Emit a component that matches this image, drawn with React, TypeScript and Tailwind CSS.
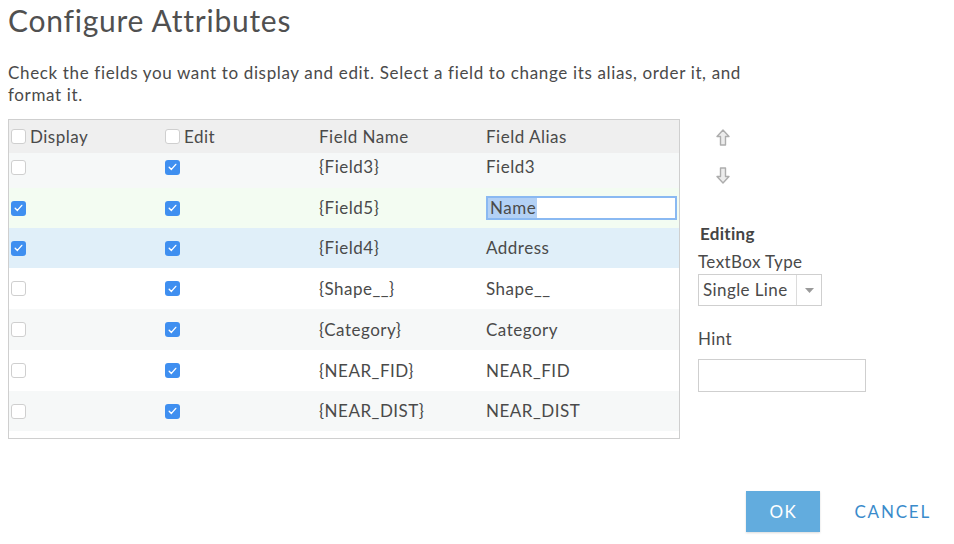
import React from "react";

const Check = ({ checked }: { checked: boolean }) =>
  checked ? (
    <div className="w-[15px] h-[15px] rounded-[3px] bg-[#3f8ff0] flex items-center justify-center">
      <svg width="9" height="8" viewBox="0 0 9 8">
        <path d="M1.2 4.3 L3.4 6.4 L7.8 1.4" fill="none" stroke="white" strokeWidth="1.4" strokeLinecap="round" strokeLinejoin="round" />
      </svg>
    </div>
  ) : (
    <div className="w-[15px] h-[15px] rounded-[3px] border border-[#cfcfcf] bg-white" />
  );

const rows = [
  { d: false, e: true, name: "{Field3}", alias: "Field3", bg: "bg-[#f6f8f8]", h: "h-[35px] pb-[7px]" },
  { d: true, e: true, name: "{Field5}", alias: "Name", bg: "bg-[#f3fcf2]", h: "h-[40px]", edit: true },
  { d: true, e: true, name: "{Field4}", alias: "Address", bg: "bg-[#e0eff9]", h: "h-[40px]" },
  { d: false, e: true, name: "{Shape__}", alias: "Shape__", bg: "bg-white", h: "h-[41px]" },
  { d: false, e: true, name: "{Category}", alias: "Category", bg: "bg-[#f6f8f8]", h: "h-[41px]" },
  { d: false, e: true, name: "{NEAR_FID}", alias: "NEAR_FID", bg: "bg-white", h: "h-[41px]" },
  { d: false, e: true, name: "{NEAR_DIST}", alias: "NEAR_DIST", bg: "bg-[#f6f8f8]", h: "h-[40px]" },
];

export default function App() {
  return (
    <div className="w-[954px] h-[544px] bg-white text-[#4a4a4a] overflow-hidden" style={{ fontFamily: "Lato, 'Noto Sans', sans-serif" }}>
      <div className="pl-[8px] pt-[2px]">
        <h1 className="text-[30px] leading-[36px] font-normal tracking-[0.75px] text-[#505050]">Configure Attributes</h1>
        <p className="mt-[24px] text-[17px] leading-[22px] w-[760px] tracking-[0.65px]">
          Check the fields you want to display and edit. Select a field to change its alias, order it, and format it.
        </p>
        <div className="mt-[13px] flex">
          <div className="w-[672px] h-[320px] border border-[#cfcfcf] bg-white flex flex-col text-[17px] tracking-[0.5px]">
            <div className="h-[33px] bg-[#efefef] grid grid-cols-[156px_154px_167px_1fr] items-center">
              <div className="flex items-center gap-[4px] pl-[2px]"><Check checked={false} /><span>Display</span></div>
              <div className="flex items-center gap-[4px]"><Check checked={false} /><span>Edit</span></div>
              <div>Field Name</div>
              <div>Field Alias</div>
            </div>
            {rows.map((r, i) => (
              <div key={i} className={`${r.h} ${r.bg} grid grid-cols-[156px_154px_167px_1fr] items-center`}>
                <div className="pl-[2px]"><Check checked={r.d} /></div>
                <div><Check checked={r.e} /></div>
                <div>{r.name}</div>
                {r.edit ? (
                  <div className="h-[24px] w-[191px] border-2 border-[#8ab9f2] bg-white flex items-center">
                    <span className="bg-[#b3d1f5] h-[20px] leading-[20px] pl-[2px] pr-[1px]">{r.alias}</span>
                  </div>
                ) : (
                  <div>{r.alias}</div>
                )}
              </div>
            ))}
          </div>
          <div className="ml-[18px] flex flex-col">
            <div className="pl-[18px] pt-[10px] flex flex-col gap-[21px]">
              <svg width="14" height="17" viewBox="0 0 14 17">
                <path d="M7 1 L13 7.5 L9.5 7.5 L9.5 16 L4.5 16 L4.5 7.5 L1 7.5 Z" fill="#ececec" stroke="#adadad" strokeWidth="1.4" strokeLinejoin="round" />
              </svg>
              <svg width="14" height="17" viewBox="0 0 14 17">
                <path d="M7 16 L13 9.5 L9.5 9.5 L9.5 1 L4.5 1 L4.5 9.5 L1 9.5 Z" fill="#ececec" stroke="#adadad" strokeWidth="1.4" strokeLinejoin="round" />
              </svg>
            </div>
            <div className="mt-[39px] pl-[2px] text-[17px] font-bold leading-[22px] text-[#444] tracking-[0.3px]">Editing</div>
            <div className="mt-[6px] text-[17px] leading-[22px] tracking-[0.4px]">TextBox Type</div>
            <div className="mt-[1px] w-[124px] h-[32px] border border-[#cfcfcf] flex items-center">
              <span className="pl-[4px] text-[17px] flex-1 tracking-[0.4px] whitespace-nowrap">Single Line</span>
              <div className="w-[25px] h-full border-l border-[#dcdcdc] flex items-center justify-center shrink-0">
                <svg width="9" height="5" viewBox="0 0 9 5"><path d="M0 0 L9 0 L4.5 5 Z" fill="#9a9a9a" /></svg>
              </div>
            </div>
            <div className="mt-[22px] text-[17px] leading-[22px] tracking-[0.4px]">Hint</div>
            <div className="mt-[9px] w-[168px] h-[33px] border border-[#cfcfcf]" />
          </div>
        </div>
        <div className="mt-[52px] flex items-center justify-end pr-[23px] gap-[34px]">
          <div className="w-[74px] h-[41px] bg-[#62acde] text-white text-[17px] tracking-[1.5px] flex items-center justify-center shadow-[0_1px_2px_rgba(0,0,0,0.15)]">OK</div>
          <div className="text-[#3a8bcb] text-[17px] tracking-[1.8px]">CANCEL</div>
        </div>
      </div>
    </div>
  );
}
